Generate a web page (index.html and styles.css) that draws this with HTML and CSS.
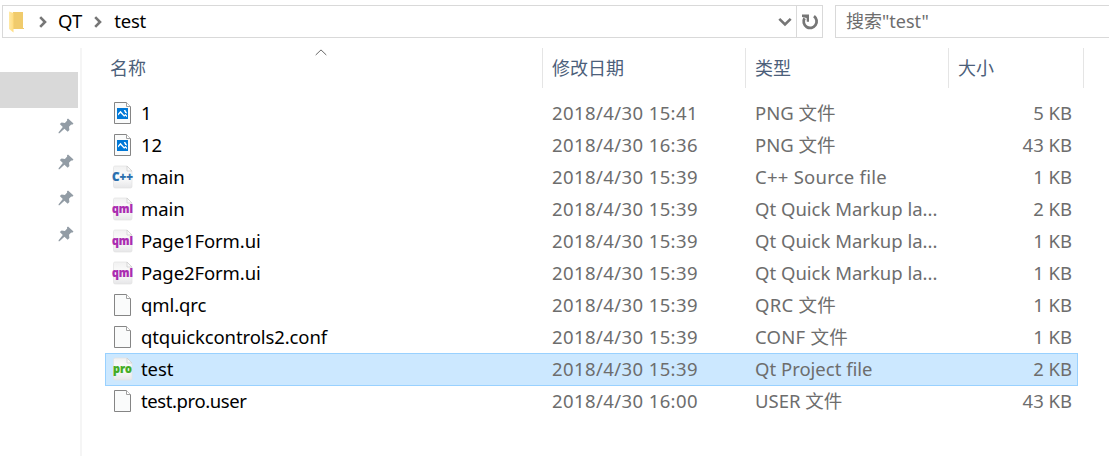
FILE: index.html
```html
<!DOCTYPE html>
<html lang="zh-CN">

<head>
    <meta charset="UTF-8" />
    <title>test</title>
    <link rel="stylesheet" href="styles.css">
</head>

<body>
    <!-- 图标 -->
    <svg class="defs" width="0" height="0">
        <linearGradient id="paper" x1="0" y1="0" x2="0" y2="1">
            <stop offset="0" stop-color="#f1f1f1" />
            <stop offset="0.5" stop-color="#fdfdfd" />
            <stop offset="1" stop-color="#e6e6e8" />
        </linearGradient>
        <linearGradient id="gold" x1="0" y1="0" x2="1" y2="0">
            <stop offset="0" stop-color="#ffe9a6" />
            <stop offset="1" stop-color="#ffdc7e" />
        </linearGradient>
        <symbol id="file" viewBox="0 0 24 24">
            <path d="M4.500 1.500h12l4 4v17h-16z" fill="#fafbfb" stroke="#858585" />
            <path d="M16.500 1.500v4h4" fill="#fff" stroke="#a0a0a0" />
        </symbol>
        <symbol id="image" viewBox="0 0 24 24">
            <use href="#file" width="24" height="24" />
            <rect x="7" y="7" width="11" height="11" fill="#0078d7" />
            <path d="M8 14.500v-1.700l2.500-3 3.700 4.200 1.200-1 1.600 1.500v1.700l-1.600-1.500-1.300 1-3.600-3.700z" fill="#fff" />
            <path d="M13.800 9h1.500l1.500 2.500v1.300l-2-1.500z" fill="#fff" />
        </symbol>
        <symbol id="code" viewBox="0 0 24 24">
            <path d="M5 1h12l5 5v15.500q0 1.500-1.500 1.500h-15Q3.500 23 3.500 21.500v-19Q3.500 1 5 1z" fill="url(#paper)" stroke="#e2e2e2" stroke-width=".7" />
            <path d="M17 1v5h5z" fill="#f8f8f8" stroke="#cfcfcf" stroke-width=".8" />
        </symbol>
        <symbol id="pin" viewBox="0 0 16 16">
            <path d="M10 .500l5.500 5-1.300 1.200-1-.2-2.200 2.200.4 3.300-1.700 1.700-3.300-3L1.500 15.200H.600v-1L4.800 9 1.800 6 3.600 4.600l3.300.3L9.200 2.600 8.900 1.500z" fill="#929ca5" />
        </symbol>
    </svg>

    <!-- 地址栏 -->
    <div class="toolbar">
        <div class="address">
            <svg class="folder" width="15" height="22" viewBox="0 0 15 22">
                <path d="M4 1h10v16h1v1H4z" fill="#f0cb6c" />
                <path d="M0 .500l4.500 1.500v19.500L0 18z" fill="url(#gold)" />
            </svg>
            <svg class="arrow" width="8" height="12" viewBox="0 0 8 12"><path d="M1.200 1.200L6 6l-4.800 4.800" /></svg>
            <span class="crumb">QT</span>
            <svg class="arrow" width="8" height="12" viewBox="0 0 8 12"><path d="M1.200 1.200L6 6l-4.800 4.800" /></svg>
            <span class="crumb last">test</span>
            <svg class="down" width="14" height="10" viewBox="0 0 14 10"><path d="M1.300 1.800L7 7.500l5.700-5.700" /></svg>
            <div class="refresh">
                <svg width="18" height="18" viewBox="0 0 18 18">
                    <path d="M13 3.200A6.500 6.500 0 1 1 3.500 5.200" fill="none" stroke="#767676" stroke-width="2.800" />
                    <path d="M1 1.500h7v7.200H5.800L5.600 5 1 4z" fill="#767676" />
                </svg>
            </div>
        </div>
        <div class="search">搜索"test"</div>
    </div>

    <div class="main">
        <div class="side">
            <div class="current"></div>
            <svg><use href="#pin" /></svg>
            <svg><use href="#pin" /></svg>
            <svg><use href="#pin" /></svg>
            <svg><use href="#pin" /></svg>
        </div>

        <div class="files">
            <div class="head">
                <span>名称<svg class="sort" width="12" height="7" viewBox="0 0 12 7"><path d="M.7 6L6 .9 11.300 6" /></svg></span>
                <span>修改日期</span>
                <span>类型</span>
                <span>大小</span>
            </div>
            <ul class="list">
                <li>
                    <svg><use href="#image" /></svg>
                    <span class="name">1</span><span class="date">2018/4/30 15:41</span><span class="type">PNG 文件</span><span class="size">5 KB</span>
                </li>
                <li>
                    <svg><use href="#image" /></svg>
                    <span class="name">12</span><span class="date">2018/4/30 16:36</span><span class="type">PNG 文件</span><span class="size">43 KB</span>
                </li>
                <li>
                    <svg><use href="#code" /><text class="cpp" x="2" y="16" textLength="21" lengthAdjust="spacingAndGlyphs">C++</text></svg>
                    <span class="name">main</span><span class="date">2018/4/30 15:39</span><span class="type wide">C++ Source file</span><span class="size">1 KB</span>
                </li>
                <li>
                    <svg><use href="#code" /><text class="qml" x="2" y="16" textLength="21" lengthAdjust="spacingAndGlyphs">qml</text></svg>
                    <span class="name">main</span><span class="date">2018/4/30 15:39</span><span class="type">Qt Quick Markup la...</span><span class="size">2 KB</span>
                </li>
                <li>
                    <svg><use href="#code" /><text class="qml" x="2" y="16" textLength="21" lengthAdjust="spacingAndGlyphs">qml</text></svg>
                    <span class="name">Page1Form.ui</span><span class="date">2018/4/30 15:39</span><span class="type">Qt Quick Markup la...</span><span class="size">1 KB</span>
                </li>
                <li>
                    <svg><use href="#code" /><text class="qml" x="2" y="16" textLength="21" lengthAdjust="spacingAndGlyphs">qml</text></svg>
                    <span class="name">Page2Form.ui</span><span class="date">2018/4/30 15:39</span><span class="type">Qt Quick Markup la...</span><span class="size">1 KB</span>
                </li>
                <li>
                    <svg><use href="#file" /></svg>
                    <span class="name">qml.qrc</span><span class="date">2018/4/30 15:39</span><span class="type wide">QRC 文件</span><span class="size">1 KB</span>
                </li>
                <li>
                    <svg><use href="#file" /></svg>
                    <span class="name">qtquickcontrols2.conf</span><span class="date">2018/4/30 15:39</span><span class="type wide">CONF 文件</span><span class="size">1 KB</span>
                </li>
                <li class="selected">
                    <svg><use href="#code" /><text class="pro" x="3" y="16" textLength="19" lengthAdjust="spacingAndGlyphs">pro</text></svg>
                    <span class="name">test</span><span class="date">2018/4/30 15:39</span><span class="type">Qt Project file</span><span class="size">2 KB</span>
                </li>
                <li>
                    <svg><use href="#file" /></svg>
                    <span class="name user">test.pro.user</span><span class="date">2018/4/30 16:00</span><span class="type">USER 文件</span><span class="size">43 KB</span>
                </li>
            </ul>
        </div>
    </div>
</body>

</html>
```
FILE: styles.css
```css
* {
    margin: 0;
    padding: 0;
    box-sizing: border-box;
}

body {
    height: 456px;
    overflow: hidden;
    background: #fff;
    color: #000;
    font: 18.5px/32px "Noto Sans", "Noto Sans CJK SC", sans-serif;
}

ul {
    list-style: none;
}

.defs {
    display: block;
}

/* 地址栏 */
.toolbar {
    display: flex;
    height: 48px;
    padding: 5px 0 0 2px;
    overflow: hidden;
}

.address {
    display: flex;
    flex: none;
    align-items: center;
    width: 821px;
    height: 33px;
    border: 1px solid #d9d9d9;
    padding-left: 6px;
}

.arrow {
    margin: 1px 12px 0;
}

.arrow path,
.down path {
    fill: none;
    stroke: #767676;
    stroke-width: 2.6;
}

.folder + .arrow {
    margin: 1px 11px 0 15px;
}

.crumb {
    height: 31px;
    line-height: 29px;
}

.last {
    letter-spacing: -0.2px;
}

.down {
    margin: 1px 4px 0 auto;
}

.refresh {
    display: flex;
    align-items: center;
    justify-content: center;
    width: 26px;
    height: 31px;
    border-left: 1px solid #d9d9d9;
}

.search {
    flex: none;
    width: 280px;
    height: 33px;
    margin-left: 12px;
    padding-left: 10px;
    border: 1px solid #d9d9d9;
    font-size: 18px;
    line-height: 31px;
    color: #6d6d6d;
}

/* 左侧导航 */
.main {
    display: flex;
    height: 408px;
}

.side {
    display: flex;
    flex-direction: column;
    align-items: flex-end;
    width: 82px;
    padding: 24px 2px 0 0;
    border-right: 2px solid #f5f5f5;
}

.current {
    width: 78px;
    height: 36px;
    margin-bottom: 10px;
    background: #d9d9d9;
}

.side svg {
    width: 16px;
    height: 16px;
    margin: 0 4px 20px 0;
}

/* 文件列表 */
.files {
    width: 1002px;
    padding-left: 23px;
}

.head {
    display: grid;
    grid-template-columns: 438px 203px 203px 135px;
    height: 49px;
    font-size: 18px;
    line-height: 41px;
    color: #4c607a;
}

.head span {
    position: relative;
    height: 40px;
    padding-left: 9px;
    border-right: 1px solid #e5e5e5;
}

.head span:first-child {
    padding-left: 5px;
}

.sort {
    position: absolute;
    left: 210px;
    top: 1px;
}

.sort path {
    fill: none;
    stroke: #666;
}

.list li {
    display: grid;
    grid-template-columns: 31px 411px 203px 204px 113px;
    width: 973px;
    height: 32px;
    padding-left: 5px;
    white-space: nowrap;
    color: #6d6d6d;
}

.list .selected {
    height: 33px;
    margin-bottom: -1px;
    background: #cce8ff;
    box-shadow: inset 0 0 0 1px #99d1ff;
}

.list svg {
    width: 24px;
    height: 24px;
    margin-top: 4px;
    overflow: visible;
}

.list .name {
    color: #000;
    letter-spacing: -0.1px;
}

.list .user {
    letter-spacing: -0.4px;
}

.list .date {
    letter-spacing: 0.4px;
}

.list .wide {
    letter-spacing: 0.25px;
}

.list .size {
    text-align: right;
}

.list text {
    font: 800 11.5px/14px "Open Sans", sans-serif;
    stroke-width: .2;
}

.cpp {
    fill: #2a6fae;
    stroke: #2a6fae;
}

.qml {
    fill: #aa2bb0;
    stroke: #aa2bb0;
}

.pro {
    fill: #43ac22;
    stroke: #43ac22;
}
```
